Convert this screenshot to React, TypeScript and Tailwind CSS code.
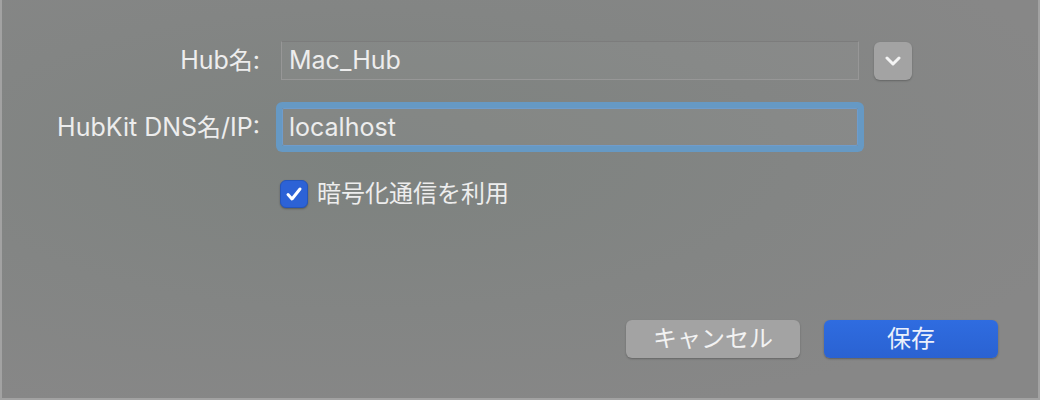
import React from "react";

const font = { fontFamily: '"Inter", "Noto Sans CJK JP", sans-serif' };

function Chevron() {
  return (
    <svg width="16" height="10" viewBox="0 0 16 10" fill="none">
      <path d="M2 2l6 6 6-6" stroke="#f4f4f4" strokeWidth="3" strokeLinecap="round" strokeLinejoin="round" />
    </svg>
  );
}

function Check() {
  return (
    <svg width="18" height="16" viewBox="0 0 18 16" fill="none">
      <path d="M3 8.5l4 4.5 8-10" stroke="#ffffff" strokeWidth="3" strokeLinecap="round" strokeLinejoin="round" />
    </svg>
  );
}

export default function App() {
  return (
    <div
      style={font}
      className="w-[1040px] h-[400px] flex flex-col border-l-2 border-r-2 border-b-2 border-[#a2a2a2] bg-[#868686] bg-[radial-gradient(ellipse_at_35%_40%,#7d827f_0%,#838584_45%,#878787_80%)] text-[24px] text-[#ededed] leading-none"
    >
      <div className="flex items-center mt-[41px] h-[39px]">
        <div className="w-[258px] text-right">
          <span className="text-[25px]">Hub</span>名<span className="text-[25px]">:</span>
        </div>
        <div className="ml-[21px] w-[578px] h-[39px] flex items-center pl-[7px] text-[25px] bg-white/[0.04] border border-[#979797] border-t-[#7c7c7c]">
          Mac_Hub
        </div>
        <button className="ml-[15px] w-[38px] h-[38px] rounded-[6px] bg-[#a3a3a3] shadow-[0_1px_2px_rgba(0,0,0,0.25)] flex items-center justify-center">
          <Chevron />
        </button>
      </div>

      <div className="flex items-center mt-[28px] h-[38px]">
        <div className="w-[258px] text-right">
          <span className="text-[25px]">HubKit DNS</span>名<span className="text-[25px]">/IP:</span>
        </div>
        <div className="ml-[22px] w-[576px] h-[38px] flex items-center pl-[6px] text-[25px] bg-white/[0.04] border border-[#6f9ccc] rounded-[2px] shadow-[0_0_0_6px_#6699c4]">
          localhost
        </div>
      </div>

      <div className="flex items-center mt-[34px] ml-[278px] gap-[9px]">
        <div className="w-[28px] h-[28px] rounded-[6px] bg-[#2c62d6] border border-[#2455bb] shadow-[0_1px_2px_rgba(0,0,0,0.3)] flex items-center justify-center">
          <Check />
        </div>
        <span>暗号化通信を利用</span>
      </div>

      <div className="flex justify-end gap-[24px] mt-[112px] mr-[40px]">
        <button className="w-[174px] h-[38px] rounded-[6px] bg-[#a3a3a3] text-[#f2f2f2] shadow-[0_1px_2px_rgba(0,0,0,0.25)]">
          キャンセル
        </button>
        <button className="w-[174px] h-[38px] rounded-[6px] bg-[linear-gradient(#2f6ce0,#2a62d2)] text-[#eaf0fc] shadow-[0_1px_2px_rgba(0,0,0,0.3)]">
          保存
        </button>
      </div>
    </div>
  );
}
